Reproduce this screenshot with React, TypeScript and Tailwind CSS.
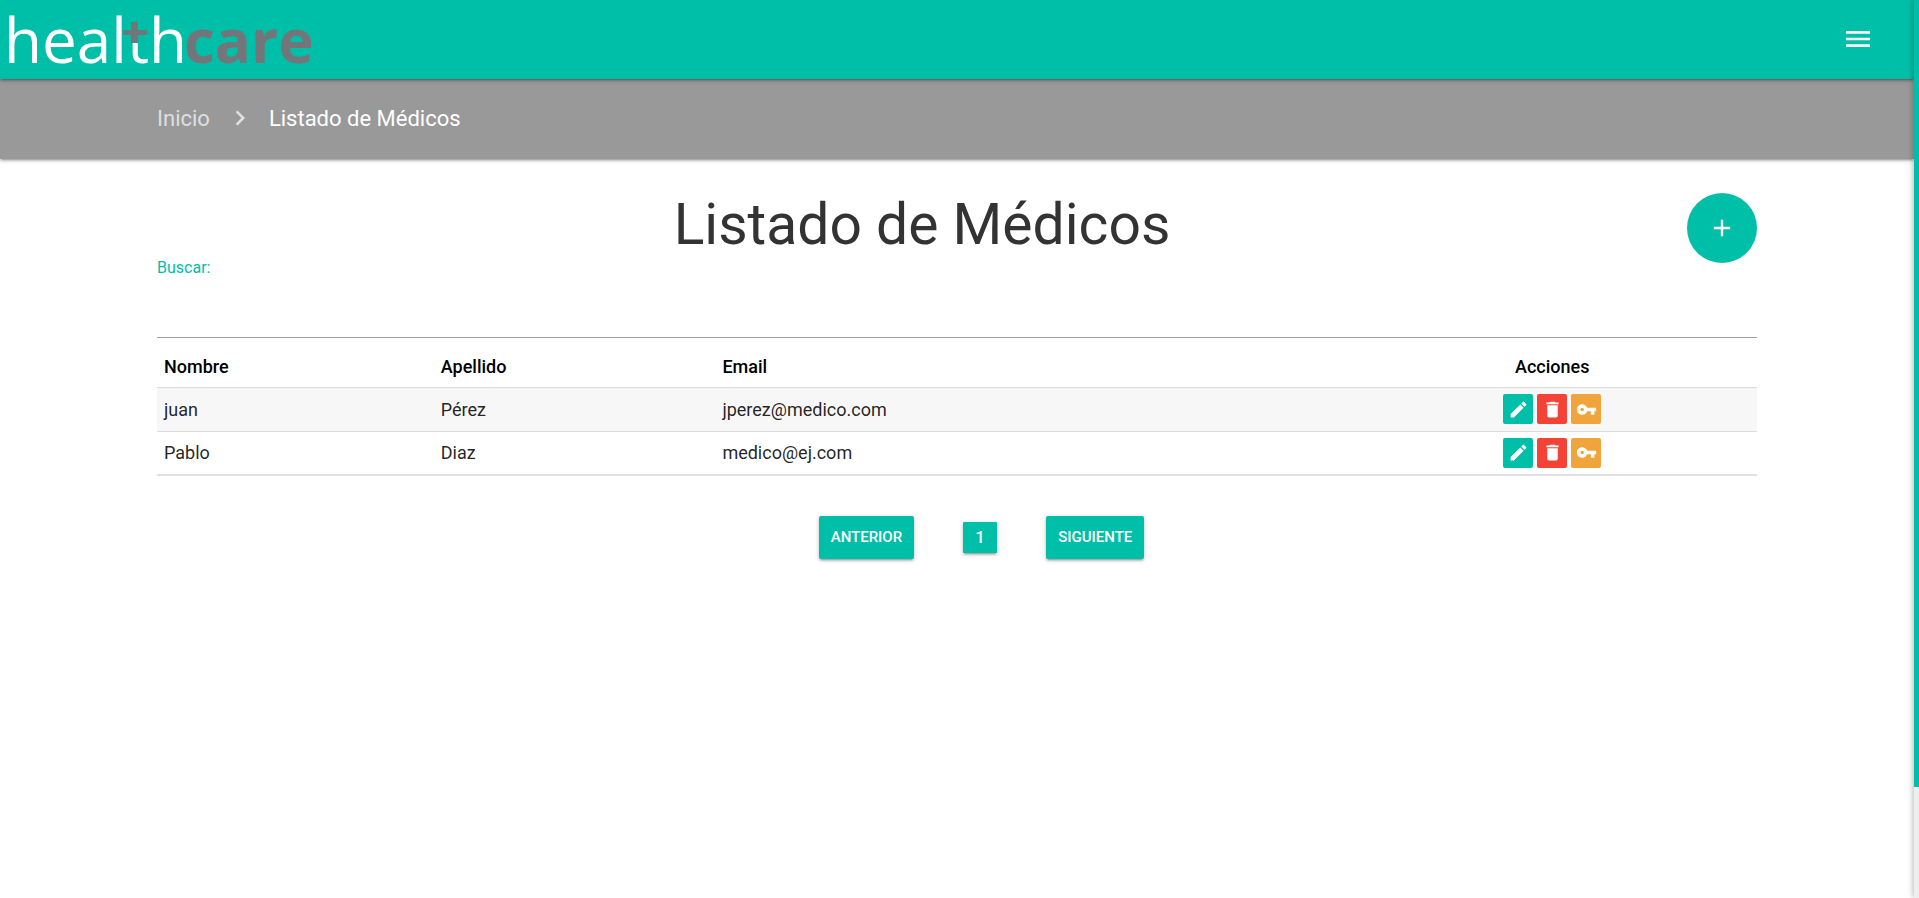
import { MdAdd, MdChevronRight, MdDelete, MdEdit, MdMenu, MdVpnKey } from "react-icons/md";

const doctors = [
  { nombre: "juan", apellido: "Pérez", email: "jperez@medico.com" },
  { nombre: "Pablo", apellido: "Diaz", email: "medico@ej.com" },
];

const raised =
  "shadow-[0_2px_2px_0_rgba(0,0,0,0.14),0_3px_1px_-2px_rgba(0,0,0,0.12),0_1px_5px_0_rgba(0,0,0,0.2)]";

const action = "flex size-[30px] items-center justify-center rounded-xs text-[21px] text-white";

function Logo() {
  return (
    <svg className="h-[79px] w-[320px] overflow-visible" viewBox="0 0 320 79" role="img" aria-label="healthcare">
      <defs>
        {/* The stem of the "t" turns from the cross's grey to white */}
        <linearGradient id="stem" gradientUnits="userSpaceOnUse" x1="0" y1="0" x2="0" y2="79">
          <stop offset="0.544" stopColor="#72767a" />
          <stop offset="0.544" stopColor="#fff" />
        </linearGradient>
      </defs>
      <text x="4" y="63" fontFamily="'Open Sans', 'Noto Sans', sans-serif" fontSize="62" fill="#fff">
        heal<tspan fill="url(#stem)">t</tspan>h
        <tspan x="184" fontSize="60" fontWeight="700" fill="#72767a">care</tspan>
      </text>
      <path d="M131 22h6v8h9v5h-9v8h-6v-8h-8v-5h8z" fill="#72767a" />
    </svg>
  );
}

function PageHeader() {
  return (
    <header>
      <nav className={`relative z-10 flex items-center justify-between bg-[#00bfa8] pr-10 ${raised}`}>
        <a href="#inicio"><Logo /></a>
        <button type="button" aria-label="Menú" className="pb-0.5 text-[32px] text-white"><MdMenu /></button>
      </nav>
      <nav aria-label="Ruta" className={`relative bg-[#999999] ${raised}`}>
        <ol className="mx-auto flex h-20 max-w-[1600px] items-center pb-0.5 text-[22px] text-white">
          <li><a href="#inicio" className="text-white/70">Inicio</a></li>
          <li className="flex items-center">
            <MdChevronRight className="mr-[14px] ml-[15px] size-[30px] text-white/70" />
            <a href="#medicos">Listado de Médicos</a>
          </li>
        </ol>
      </nav>
    </header>
  );
}

function DoctorsTable() {
  return (
    <table className="mt-2 w-full table-fixed border-b-2 border-[#e0e0e0] text-left text-[18px] text-black/87">
      <colgroup>
        <col className="w-[17.3%]" />
        <col className="w-[17.6%]" />
        <col className="w-[39.5%]" />
        <col />
      </colgroup>
      <thead>
        <tr className="h-[41px] border-b border-[#dcdcdc] text-black">
          <th className="px-[7px] font-medium">Nombre</th>
          <th className="px-[7px] font-medium">Apellido</th>
          <th className="px-[7px] font-medium">Email</th>
          <th className="px-[7px] text-center font-medium">Acciones</th>
        </tr>
      </thead>
      <tbody>
        {doctors.map((d) => (
          <tr key={d.email} className="h-11 border-b border-[#dcdcdc] odd:bg-[#f7f7f7] last:border-b-0">
            <td className="px-[7px]">{d.nombre}</td>
            <td className="px-[7px]">{d.apellido}</td>
            <td className="px-[7px]">{d.email}</td>
            <td className="px-[7px]">
              <div className="flex justify-center gap-1">
                <button type="button" aria-label="Editar" className={`${action} bg-[#00bfa8]`}><MdEdit /></button>
                <button type="button" aria-label="Eliminar" className={`${action} bg-[#f44336]`}><MdDelete /></button>
                <button type="button" aria-label="Cambiar clave" className={`${action} bg-[#f1a43c]`}><MdVpnKey /></button>
              </div>
            </td>
          </tr>
        ))}
      </tbody>
    </table>
  );
}

function Pagination() {
  const step = `h-[43px] rounded-xs bg-[#00bfa8] px-3 text-[15px] font-medium uppercase text-white ${raised}`;
  return (
    <nav aria-label="Paginación" className="mt-10 flex items-center justify-center gap-[49px] pl-[49px]">
      <button type="button" className={step}>Anterior</button>
      <button type="button" aria-current="page" className={`h-[31px] w-[34px] rounded-[1px] bg-[#00bfa8] text-[16px] font-medium text-white ${raised}`}>1</button>
      <button type="button" className={step}>Siguiente</button>
    </nav>
  );
}

export default function App() {
  return (
    <div className="flex min-h-screen bg-white font-['Roboto',sans-serif]">
      <div className="min-w-0 flex-1">
        <PageHeader />
        <main className="mx-auto max-w-[1600px] pt-[34px]">
          <div className="grid grid-cols-[1fr_70px] items-start">
            <h1 className="text-center text-[57px] leading-[63px] text-[#333333]">Listado de Médicos</h1>
            <button type="button" aria-label="Agregar médico" className="-mb-2 flex size-[70px] items-center justify-center rounded-full bg-[#00bfa8] text-[28px] text-white">
              <MdAdd />
            </button>
          </div>
          <div className="flex flex-col">
            <label htmlFor="buscar" className="text-[16px] leading-6 text-[#00bfa8]">Buscar:</label>
            <input id="buscar" type="text" className="mt-2.5 h-12 border-b border-[#9e9e9e] bg-transparent text-[16px] outline-none" />
          </div>
          <DoctorsTable />
          <Pagination />
        </main>
      </div>
      <div className="sticky top-0 z-20 h-screen w-[5px] bg-[#eeeeee] shadow-[0_0_6px_rgba(0,0,0,0.4)]">
        <div className="h-[87.6%] bg-[#00bfa8]" />
      </div>
    </div>
  );
}
